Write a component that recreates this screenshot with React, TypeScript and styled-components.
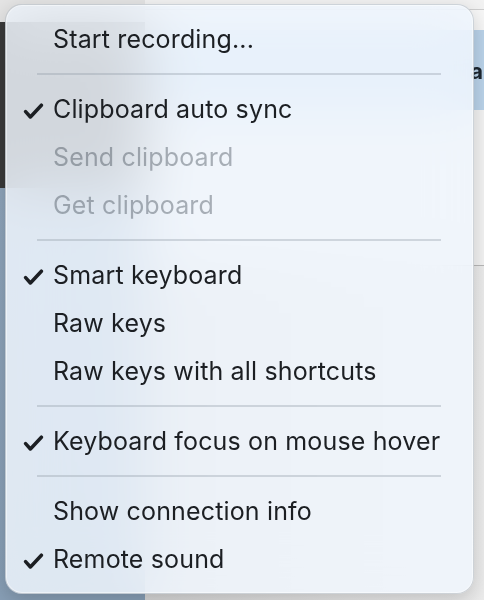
import React from 'react'
import styled, { createGlobalStyle } from 'styled-components';

// Global
const GlobalStyle = createGlobalStyle`
  html, body {
    margin: 0;
    padding: 0;
    width: 484px;
    height: 600px;
    overflow: hidden;
    background: #e9e9e9;
  }
  #root {
    width: 484px;
    height: 600px;
  }
`;

// Desktop behind the menu
const Desktop = styled.div`
  position: relative;
  display: grid;
  grid-template-columns: 145px 1fr;
  width: 484px;
  height: 600px;
  overflow: hidden;
  font-family: Inter, "Noto Sans", sans-serif;
`;

const Column = styled.div`
  display: flex;
  flex-direction: column;
  min-width: 0;
`;

const Strip = styled.div<{ $h?: number; $bg: string }>`
  flex: ${p => (p.$h ? `0 0 ${p.$h}px` : '1 1 auto')};
  background: ${p => p.$bg};
`;

const Band = styled.div`
  flex: 0 0 80px;
  background: #bad3ea;
  display: flex;
  justify-content: flex-end;
  align-items: center;
  padding: 2px 1px 0 0;
  box-sizing: border-box;
`;

const EdgeLetter = styled.span`
  font-size: 22px;
  font-weight: 700;
  color: #1d2630;
  line-height: 1;
`;

// Menu
const Menu = styled.div`
  position: absolute;
  left: 5px;
  top: 4px;
  width: 469px;
  box-sizing: border-box;
  padding: 10px 0 10px;
  border-radius: 17px;
  background: rgba(239, 245, 253, 0.84);
  backdrop-filter: blur(28px) saturate(1.2);
  -webkit-backdrop-filter: blur(28px) saturate(1.2);
  border: 1px solid rgba(0, 0, 0, 0.14);
  box-shadow: 0 6px 20px rgba(0, 0, 0, 0.18), inset 0 0 0 1px rgba(255, 255, 255, 0.45);
  display: flex;
  flex-direction: column;
`;

const Item = styled.div<{ $disabled?: boolean }>`
  display: flex;
  align-items: center;
  height: 48px;
  padding-left: 17px;
  font-size: 25px;
  letter-spacing: 0.15px;
  color: ${p => (p.$disabled ? 'rgba(40, 50, 60, 0.36)' : '#1c1f23')};
  white-space: nowrap;
`;

const CheckSlot = styled.span`
  display: inline-flex;
  width: 30px;
  height: 48px;
  align-items: center;
  padding-top: 4px;
  box-sizing: border-box;
`;

const Separator = styled.div`
  height: 2px;
  margin: 10px 32px 10px 31px;
  background: rgba(150, 160, 172, 0.38);
`;

const Check = () => (
  <svg width="21" height="17" viewBox="0 0 21 17">
    <path
      d="M2.6 8.6 L7.4 14 L18.4 2.2"
      fill="none"
      stroke="#1c1f23"
      strokeWidth="3.5"
      strokeLinecap="round"
      strokeLinejoin="round"
    />
  </svg>
);

type Entry =
  | { kind: 'item'; label: string; checked?: boolean; disabled?: boolean }
  | { kind: 'sep' };

const entries: Entry[] = [
  { kind: 'item', label: 'Start recording...' },
  { kind: 'sep' },
  { kind: 'item', label: 'Clipboard auto sync', checked: true },
  { kind: 'item', label: 'Send clipboard', disabled: true },
  { kind: 'item', label: 'Get clipboard', disabled: true },
  { kind: 'sep' },
  { kind: 'item', label: 'Smart keyboard', checked: true },
  { kind: 'item', label: 'Raw keys' },
  { kind: 'item', label: 'Raw keys with all shortcuts' },
  { kind: 'sep' },
  { kind: 'item', label: 'Keyboard focus on mouse hover', checked: true },
  { kind: 'sep' },
  { kind: 'item', label: 'Show connection info' },
  { kind: 'item', label: 'Remote sound', checked: true },
];

const App = () => {
  return (
    <>
      <GlobalStyle />
      <Desktop>
        <Column>
          <Strip $h={22} $bg="#e4e4e4" />
          <Strip $h={166} $bg="#3a3a3a" />
          <Strip $bg="linear-gradient(180deg, #8fa5bb 0%, #889fb6 100%)" />
        </Column>
        <Column>
          <Strip $h={9} $bg="#f2f2f2" />
          <Strip $h={1} $bg="#cfcfcf" />
          <Strip $h={20} $bg="#f7f7f7" />
          <Band>
            <EdgeLetter>a</EdgeLetter>
          </Band>
          <Strip $h={155} $bg="#f3f3f3" />
          <Strip $h={1} $bg="#b8b8b8" />
          <Strip $bg="linear-gradient(90deg, #d6d6d6 0%, #e6e6e6 60%, #ececec 100%)" />
        </Column>
        <Menu>
          {entries.map((e, i) =>
            e.kind === 'sep' ? (
              <Separator key={i} />
            ) : (
              <Item key={i} $disabled={e.disabled}>
                <CheckSlot>{e.checked ? <Check /> : null}</CheckSlot>
                {e.label}
              </Item>
            )
          )}
        </Menu>
      </Desktop>
    </>
  )
}

export default App
